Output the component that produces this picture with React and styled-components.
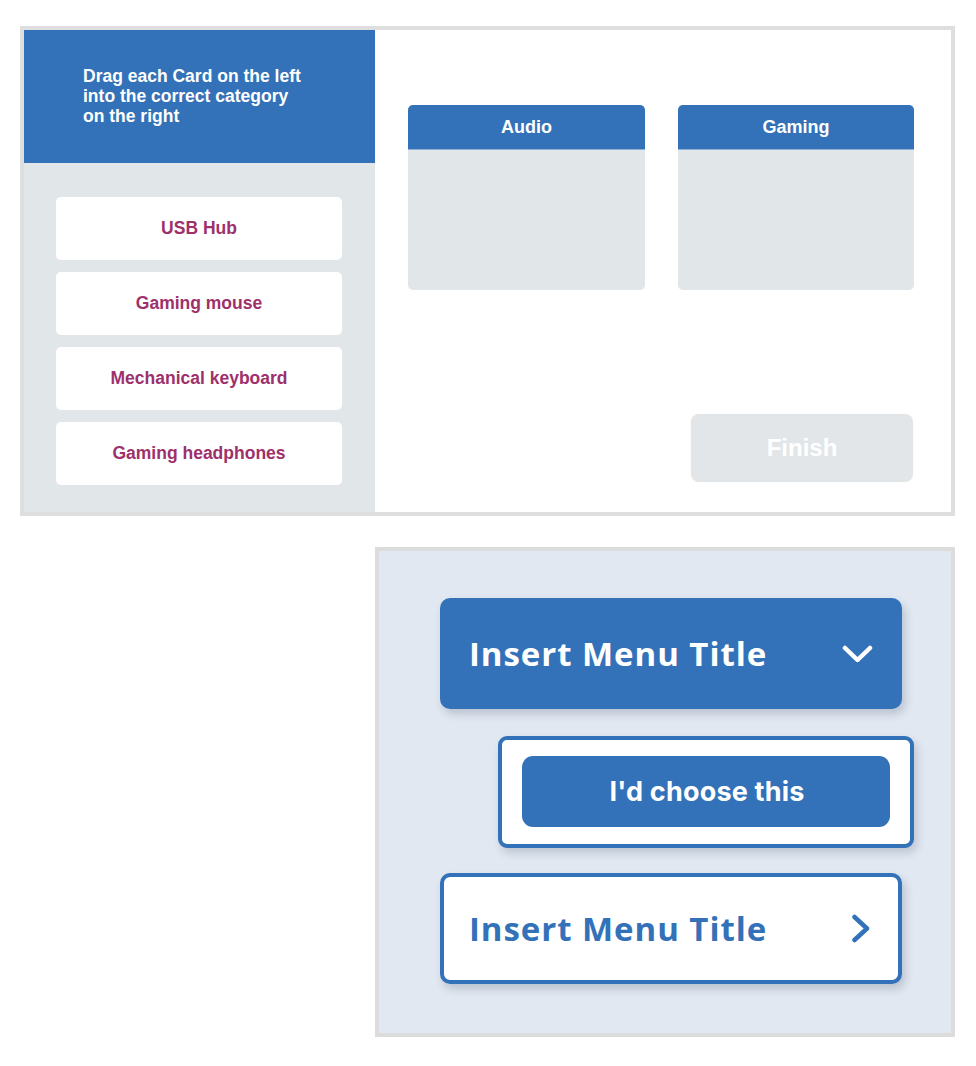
import React from "react";
import styled, { createGlobalStyle } from "styled-components";

const BLUE = "#3372b8";
const GRAY = "#e1e6e9";

const Global = createGlobalStyle`
  html, body { margin: 0; padding: 0; background: #ffffff; }
  body { font-family: "Liberation Sans", Arial, sans-serif; }
  * { box-sizing: border-box; }
`;

const Page = styled.div`
  display: flex;
  flex-direction: column;
  align-items: flex-start;
  padding: 26px 0 29px 20px;
  gap: 31px;
`;

const Activity = styled.section`
  width: 935px;
  height: 490px;
  border: 4px solid #dedede;
  display: grid;
  grid-template-columns: 351px 1fr;
  background: #fff;
`;

const LeftColumn = styled.div`
  display: flex;
  flex-direction: column;
  background: ${GRAY};
`;

const Instructions = styled.div`
  height: 133px;
  background: ${BLUE};
  color: #fff;
  display: flex;
  align-items: center;
  padding: 0 0 2px 59px;
  font-weight: 700;
  font-size: 17.5px;
  line-height: 20px;
`;

const InstructionText = styled.p`
  margin: 0;
  width: 222px;
`;

const CardList = styled.div`
  display: flex;
  flex-direction: column;
  gap: 12px;
  padding: 34px 33px 0 32px;
`;

const Card = styled.div`
  height: 63px;
  background: #fff;
  border-radius: 5px;
  display: flex;
  align-items: center;
  justify-content: center;
  color: #9e306b;
  font-weight: 700;
  font-size: 17.5px;
`;

const RightColumn = styled.div`
  display: flex;
  flex-direction: column;
  padding: 75px 37px 0 33px;
`;

const Categories = styled.div`
  display: grid;
  grid-template-columns: 237px 236px;
  column-gap: 33px;
`;

const Category = styled.div`
  height: 185px;
  border-radius: 5px;
  overflow: hidden;
  background: ${GRAY};
  display: flex;
  flex-direction: column;
`;

const CategoryHeader = styled.div`
  height: 45px;
  background: ${BLUE};
  color: #fff;
  font-weight: 700;
  font-size: 18px;
  display: flex;
  align-items: center;
  justify-content: center;
  border-bottom: 1px solid #8fb0d6;
`;

const FinishButton = styled.button`
  align-self: flex-end;
  margin: 124px 1px 0 0;
  width: 222px;
  height: 68px;
  border: none;
  border-radius: 8px;
  background: #e2e6e9;
  box-shadow: 0 0 2px rgba(0, 0, 0, 0.06);
  color: #fff;
  font-family: "Liberation Sans", Arial, sans-serif;
  font-weight: 700;
  font-size: 24px;
  padding: 0;
`;

const MenuPanel = styled.section`
  margin-left: 355px;
  width: 580px;
  height: 490px;
  border: 4px solid #dcdcdc;
  background: #e2e8f1;
  display: flex;
  flex-direction: column;
  align-items: flex-start;
  padding: 47px 0 0 61px;
`;

const MenuButton = styled.div`
  width: 462px;
  height: 111px;
  margin-top: ${(p) => p.$gap || 0}px;
  border-radius: 10px;
  background: ${(p) => (p.$outlined ? "#fff" : BLUE)};
  border: ${(p) => (p.$outlined ? `4px solid ${BLUE}` : "none")};
  color: ${(p) => (p.$outlined ? BLUE : "#fff")};
  box-shadow: 3px 5px 9px rgba(40, 60, 90, 0.22);
  display: flex;
  align-items: center;
  justify-content: space-between;
  padding: ${(p) => (p.$outlined ? "0 27px 0 25px" : "0 29px 0 29px")};
`;

const MenuTitle = styled.span`
  font-family: "Open Sans", "Noto Sans", sans-serif;
  font-weight: 700;
  font-size: 33px;
  letter-spacing: 0.95px;
`;

const OptionFrame = styled.div`
  margin: 27px 0 0 58px;
  width: 416px;
  height: 112px;
  border: 4px solid ${BLUE};
  border-radius: 9px;
  background: #fff;
  box-shadow: 3px 5px 9px rgba(40, 60, 90, 0.2);
  padding: 16px 20px 17px 20px;
  display: flex;
`;

const OptionButton = styled.div`
  flex: 1;
  border-radius: 11px;
  background: ${BLUE};
  color: #fff;
  display: flex;
  align-items: center;
  justify-content: center;
  font-family: Inter, "Open Sans", sans-serif;
  font-weight: 700;
  font-size: 27px;
  letter-spacing: 0.2px;
  padding: 0 0 0 2px;
`;

const ChevronDown = () => (
  <svg width="31" height="18" viewBox="0 0 31 18" aria-hidden="true">
    <polyline
      points="3,3 15.5,15 28,3"
      fill="none"
      stroke="#fff"
      strokeWidth="4.5"
      strokeLinecap="round"
      strokeLinejoin="round"
    />
  </svg>
);

const ChevronRight = () => (
  <svg width="20" height="29" viewBox="0 0 20 29" aria-hidden="true">
    <polyline
      points="3.5,3 16,14.5 3.5,26"
      fill="none"
      stroke={BLUE}
      strokeWidth="4.5"
      strokeLinecap="round"
      strokeLinejoin="round"
    />
  </svg>
);

const cards = ["USB Hub", "Gaming mouse", "Mechanical keyboard", "Gaming headphones"];
const categories = ["Audio", "Gaming"];

export default function App() {
  return (
    <>
      <Global />
      <Page>
        <Activity>
          <LeftColumn>
            <Instructions>
              <InstructionText>
                Drag each Card on the left into the correct category on the right
              </InstructionText>
            </Instructions>
            <CardList>
              {cards.map((c) => (
                <Card key={c}>{c}</Card>
              ))}
            </CardList>
          </LeftColumn>
          <RightColumn>
            <Categories>
              {categories.map((c) => (
                <Category key={c}>
                  <CategoryHeader>{c}</CategoryHeader>
                </Category>
              ))}
            </Categories>
            <FinishButton>Finish</FinishButton>
          </RightColumn>
        </Activity>
        <MenuPanel>
          <MenuButton>
            <MenuTitle>Insert Menu Title</MenuTitle>
            <ChevronDown />
          </MenuButton>
          <OptionFrame>
            <OptionButton>I'd choose this</OptionButton>
          </OptionFrame>
          <MenuButton $outlined $gap={25}>
            <MenuTitle>Insert Menu Title</MenuTitle>
            <ChevronRight />
          </MenuButton>
        </MenuPanel>
      </Page>
    </>
  );
}
